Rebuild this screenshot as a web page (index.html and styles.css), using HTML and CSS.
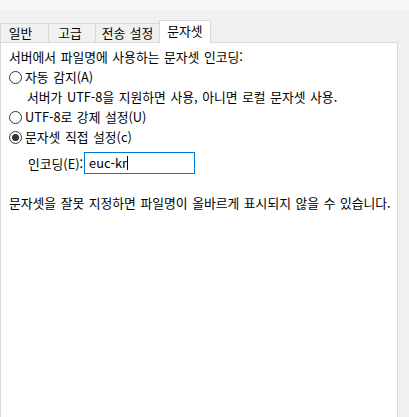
FILE: index.html
```html
<!DOCTYPE html>
<html lang="ko">
<head>
  <meta charset="UTF-8">
  <title>문자셋</title>
  <link rel="stylesheet" href="styles.css">
</head>
<body>
  <div class="topstrip"></div>
  <div class="tabs">
    <div class="tab t1">일반</div>
    <div class="tab t2">고급</div>
    <div class="tab t3">전송 설정</div>
    <div class="tab active">문자셋</div>
  </div>
  <div class="panel">
    <div class="line">서버에서 파일명에 사용하는 문자셋 인코딩:</div>
    <label class="radio-row"><span class="radio"></span>자동 감지(A)</label>
    <div class="line indent">서버가 UTF-8을 지원하면 사용, 아니면 로컬 문자셋 사용.</div>
    <label class="radio-row"><span class="radio"></span>UTF-8로 강제 설정(U)</label>
    <label class="radio-row"><span class="radio checked"></span>문자셋 직접 설정(c)</label>
    <div class="enc-row">
      <span>인코딩(E):</span>
      <div class="input">euc-kr<span class="caret"></span></div>
    </div>
    <div class="line note">문자셋을 잘못 지정하면 파일명이 올바르게 표시되지 않을 수 있습니다.</div>
  </div>
</body>
</html>
```

FILE: styles.css
```css
* { margin: 0; padding: 0; box-sizing: border-box; }
body {
  font-family: "Noto Sans CJK KR", "Noto Sans", sans-serif;
  font-size: 12.8px;
  word-spacing: 1px;
  color: #000;
  background: #f0f0f0;
  width: 409px;
  height: 417px;
  overflow: hidden;
}
.topstrip { height: 10px; background: #f8f8f8; }
.tabs { display: flex; align-items: flex-end; height: 32px; }
.tab {
  height: 19px;
  line-height: 18px;
  text-align: center;
  border: 1px solid #d9d9d9;
  border-bottom: none;
  margin-left: -1px;
  background: #f0f0f0;
}
.t1 { width: 49px; margin-left: 0; padding-right: 8px; }
.t2 { width: 48px; padding-right: 4px; }
.t3 { width: 65px; }
.tab.active {
  width: 52px;
  height: 23px;
  line-height: 20px;
  background: #fff;
  margin-bottom: -1px;
  position: relative;
  z-index: 1;
}
.panel {
  width: 398px;
  height: 380px;
  background: #fff;
  border: 1px solid #d9d9d9;
  border-bottom: none;
  padding: 4px 0 0 8px;
  display: flex;
  flex-direction: column;
}
.line { line-height: 20px; height: 20px; white-space: nowrap; }
.indent { padding-left: 18px; }
.radio-row { display: flex; align-items: center; height: 20px; line-height: 20px; }
.radio {
  width: 13px;
  height: 13px;
  border: 1px solid #333;
  border-radius: 50%;
  margin-right: 3px;
  display: flex;
  align-items: center;
  justify-content: center;
}
.radio.checked::after {
  content: "";
  width: 7px;
  height: 7px;
  border-radius: 50%;
  background: #333;
}
.enc-row { display: flex; align-items: center; margin-top: 5px; padding-left: 19px; }
.input {
  margin-left: 1px;
  width: 111px;
  height: 22px;
  border: 1px solid #0078d7;
  padding-left: 4px;
  line-height: 20px;
  display: flex;
  align-items: center;
}
.caret { width: 1px; height: 14px; background: #000; }
.note { margin-top: 19px; }
```
